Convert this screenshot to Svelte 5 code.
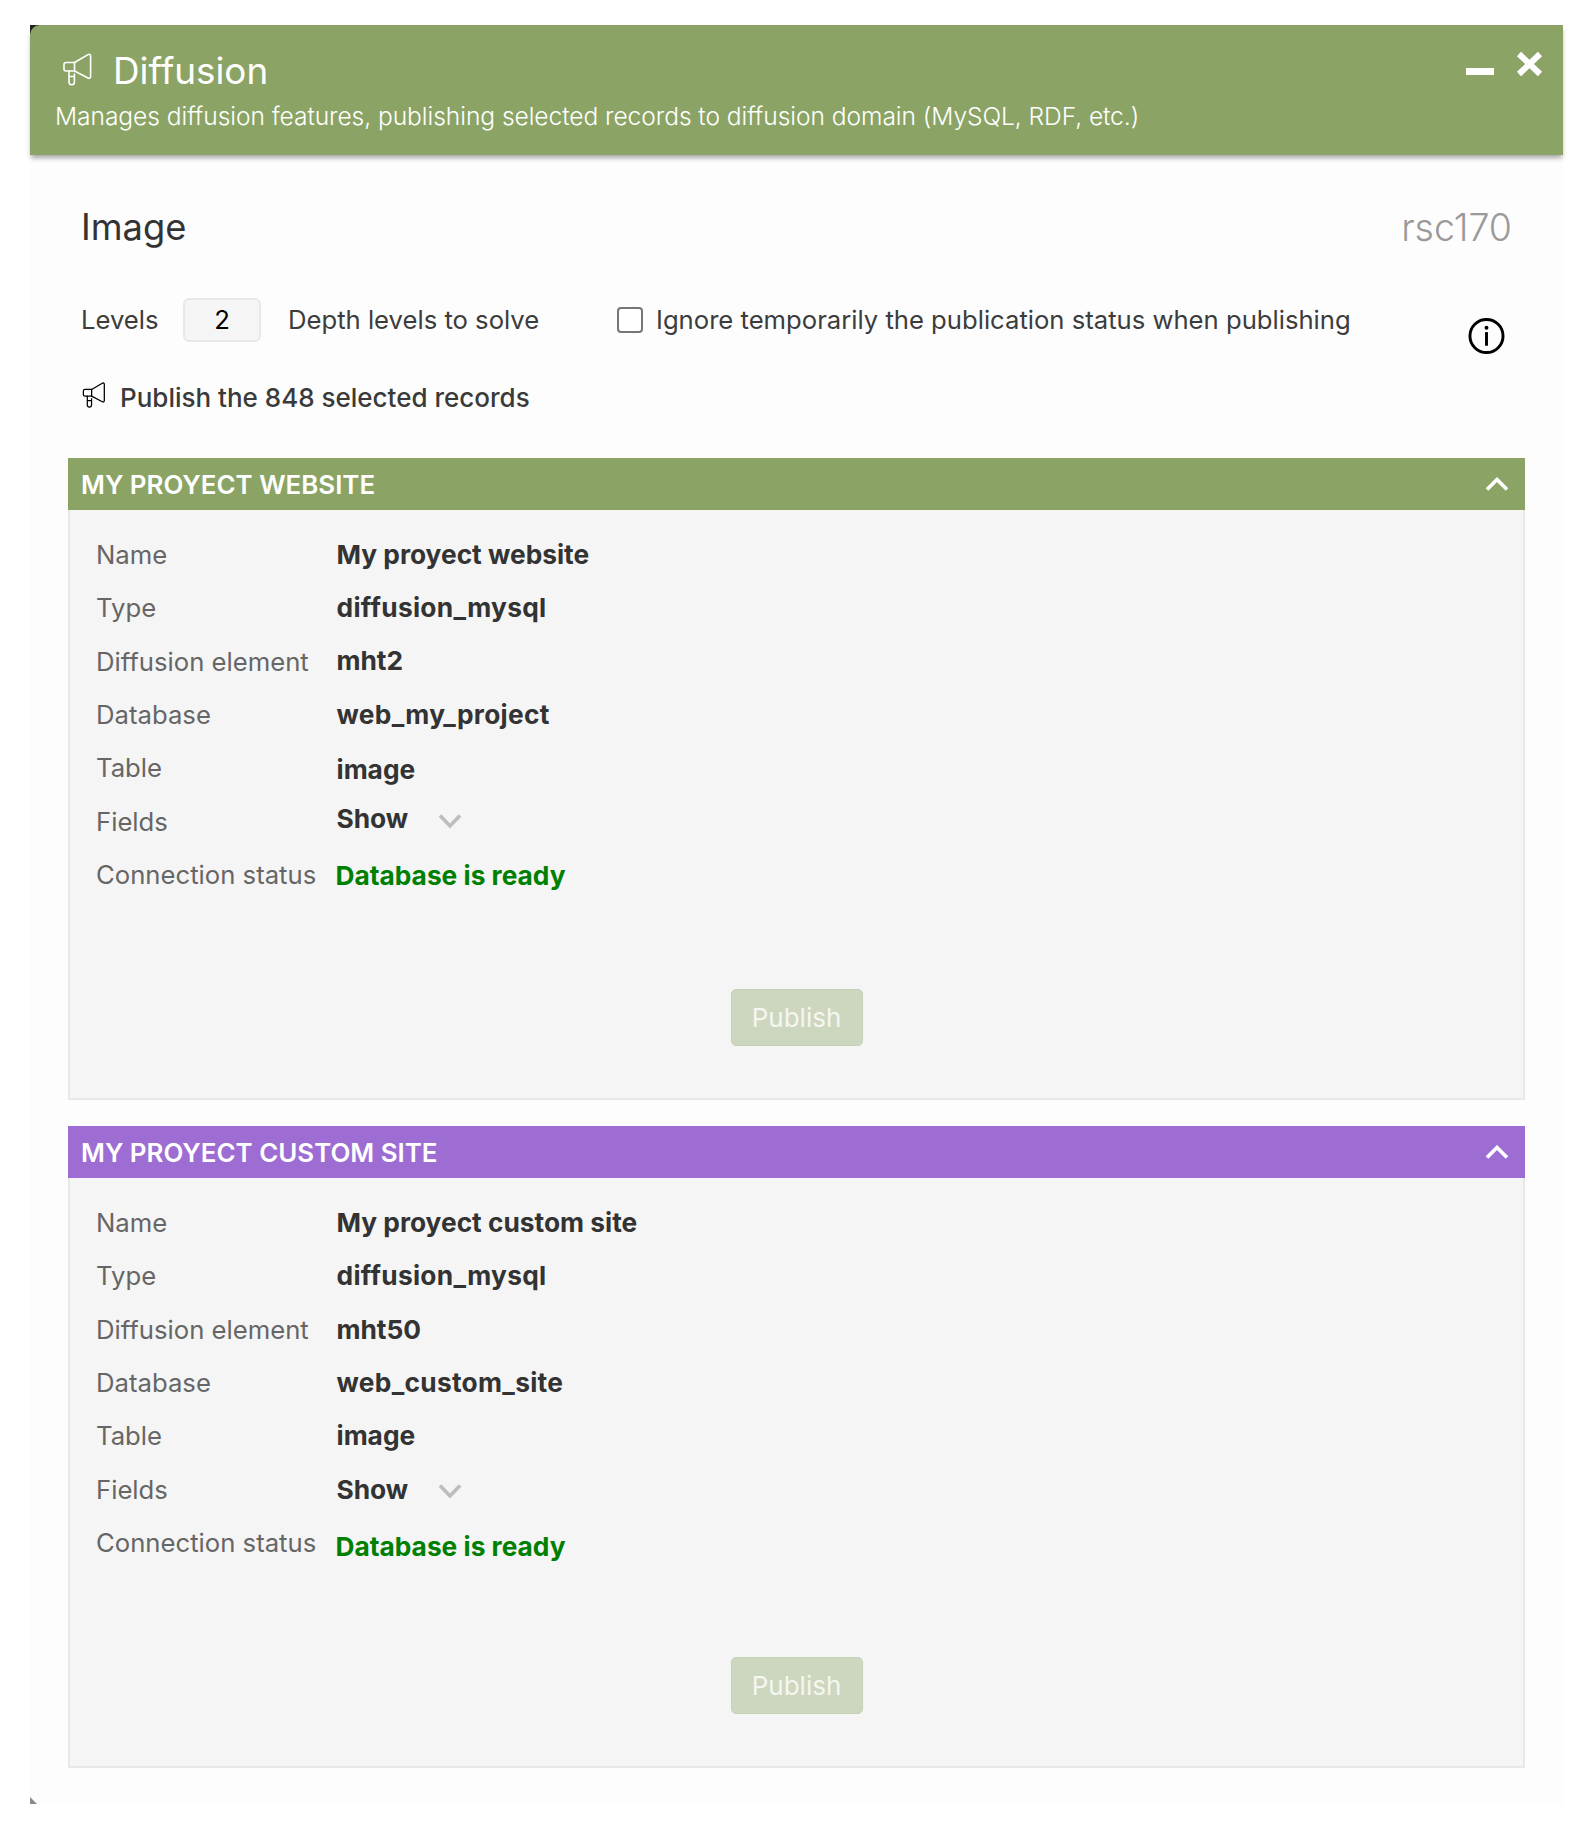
<script>
  const panels = [
    { title: 'MY PROYECT WEBSITE', color: 'green', cls: 'first', name: 'My proyect website', element: 'mht2', db: 'web_my_project' },
    { title: 'MY PROYECT CUSTOM SITE', color: 'purple', cls: 'second', name: 'My proyect custom site', element: 'mht50', db: 'web_custom_site' }
  ];
</script>

{#snippet megaphone(cls)}
  <svg class={cls} viewBox="0 0 29 33" fill="none" stroke="currentColor" stroke-width="1.6" stroke-linejoin="round" stroke-linecap="round">
    <path d="M3 9.5h8.5L25 1.6c1.4-.8 2.6 0 2.6 1.4v20.6c0 1.5-1.2 2.2-2.6 1.4L11.5 18H3c-1.2 0-2-.8-2-2v-4.500c0-1.200.8-2 2-2z"/>
    <path d="M11.500 9.500V18M6 18v11c0 1.800 1.200 2.800 2.700 2.800s2.700-1 2.700-2.800V21M6 23.500h5.400"/>
  </svg>
{/snippet}

<div class="window">
  <header class="head">
    <div class="head-text">
      <h1>{@render megaphone('mega-big')}<span>Diffusion</span></h1>
      <p>Manages diffusion features, publishing selected records to diffusion domain (MySQL, RDF, etc.)</p>
    </div>
    <div class="head-btns">
      <span class="minimize"></span>
      <svg class="close" viewBox="0 0 27 26"><path d="M3 3l21 20M24 3L3 23" stroke="#fff" stroke-width="6"/></svg>
    </div>
  </header>

  <main class="content">
    <div class="title-row">
      <h2>Image</h2>
      <span class="rsc">rsc170</span>
    </div>

    <div class="options">
      <span class="lab-levels">Levels</span>
      <span class="levels-input">2</span>
      <span class="lab-depth">Depth levels to solve</span>
      <span class="check"></span>
      <span class="lab-ignore">Ignore temporarily the publication status when publishing</span>
      <svg class="info" viewBox="0 0 37 37" fill="none" stroke="#000">
        <circle cx="18.500" cy="18.500" r="17" stroke-width="3"/>
        <path d="M18.500 14.500v14" stroke-width="3"/>
        <circle cx="18.500" cy="10" r="2" fill="#000" stroke="none"/>
      </svg>
    </div>

    <div class="publish-all">
      {@render megaphone('mega-small')}
      <span class="publish-label">Publish the 848 selected records</span>
    </div>

    {#each panels as p}
      <section class="panel {p.cls}">
        <div class="panel-head {p.color}">
          <span>{p.title}</span>
          <svg class="chev-up" viewBox="0 0 24 14" fill="none" stroke="#fff" stroke-width="3.600"><path d="M2 12.500L12 2.500l10 10"/></svg>
        </div>
        <div class="panel-body">
          <dl>
            <dt>Name</dt><dd>{p.name}</dd>
            <dt>Type</dt><dd class="code">diffusion_mysql</dd>
            <dt>Diffusion element</dt><dd>{p.element}</dd>
            <dt>Database</dt><dd class="code">{p.db}</dd>
            <dt>Table</dt><dd class="tbl">image</dd>
            <dt>Fields</dt>
            <dd class="fields">Show
              <svg class="chev-down" viewBox="0 0 24 16" fill="none" stroke="#bdbdbd" stroke-width="3.600"><path d="M2 2.500l10 10.500L22 2.500"/></svg>
            </dd>
            <dt>Connection status</dt><dd class="ready">Database is ready</dd>
          </dl>
          <div class="actions"><button disabled>Publish</button></div>
        </div>
      </section>
    {/each}
  </main>
  <span class="corner-tl"></span>
  <span class="corner-bl"></span>
</div>

<style>
  :global(body) {
    margin: 0;
    background: #fff;
    font-family: Inter, "Liberation Sans", sans-serif;
    color: #333;
  }
  .window {
    position: relative;
    width: 1533px;
    height: 1780px;
    margin: 25px 0 0 30px;
    background: #fdfdfd;
    box-sizing: border-box;
  }
  .head {
    position: relative;
    z-index: 1;
    height: 130px;
    box-sizing: border-box;
    background: #8ba465;
    color: #fff;
    border-top-left-radius: 10px;
    box-shadow: 0 4px 5px -1px rgba(0, 0, 0, 0.35);
    display: flex;
    justify-content: space-between;
    padding: 27px 20px 0 25px;
  }
  h1 {
    margin: 0 0 0 8px;
    display: flex;
    align-items: center;
    gap: 21px;
    font-size: 36.8px;
    font-weight: 400;
    line-height: 38px;
  }
  .mega-big { width: 29px; height: 33px; margin-top: -3px; }
  .head p {
    margin: 11px 0 0;
    font-size: 24.6px;
    font-weight: 300;
    line-height: 30px;
    letter-spacing: -0.07px;
  }
  .head-btns { display: flex; align-items: flex-start; gap: 22px; }
  .minimize { width: 28px; height: 7px; margin-top: 16px; background: #fff; }
  .close { width: 27px; height: 26px; margin-top: -1px; }
  .content { padding: 0 38px; }
  .title-row {
    display: flex;
    justify-content: space-between;
    align-items: center;
    height: 48px;
    margin-top: 48px;
    padding: 0 13px 0 13px;
  }
  h2 { margin: 0; font-size: 36.3px; font-weight: 400; color: #333; }
  .rsc { font-size: 37.5px; font-weight: 300; color: #9a9a9a; }
  .options {
    display: flex;
    align-items: center;
    margin-top: 47px;
    height: 44px;
    padding-left: 13px;
    font-size: 25.65px;
    color: #3c3c3c;
    position: relative;
  }
  .lab-levels { width: 102px; margin-bottom: 2px; }
  .levels-input {
    width: 78px;
    height: 44px;
    box-sizing: border-box;
    background: #f5f5f5;
    border: 2px solid #e8e8e8;
    border-radius: 6px;
    text-align: center;
    line-height: 40px;
    color: #000;
  }
  .lab-depth { margin: 0 0 2px 27px; width: 329px; }
  .check {
    width: 26px;
    height: 26px;
    box-sizing: border-box;
    border: 2px solid #767676;
    border-radius: 4px;
    background: #fff;
  }
  .lab-ignore { margin: 0 0 2px 13px; }
  .info { position: absolute; left: 1400px; top: 20px; width: 37px; height: 36px; }
  .publish-all {
    display: flex;
    align-items: center;
    gap: 14px;
    margin: 38px 0 0 14px;
    height: 36px;
    font-size: 26px;
    font-weight: 500;
    color: #3a3a3a;
  }
  .publish-label { margin-bottom: 2px; }
  .mega-small { width: 24px; height: 26px; margin-top: -6px; color: #000; }
  .panel { width: 1457px; margin-top: 26px; }
  .publish-all + .panel { margin-top: 42px; }
  .panel-head {
    height: 52px;
    display: flex;
    align-items: center;
    justify-content: space-between;
    padding: 0 16px 0 13px;
    color: #fff;
    font-size: 25.9px;
    font-weight: 600;
  }
  .green { background: #8ba465; }
  .purple { background: #9d6dd4; }
  .chev-up { width: 24px; height: 14px; }
  .panel-body {
    height: 590px;
    box-sizing: border-box;
    background: #f5f5f5;
    border: 2px solid #e8e8e8;
    border-top: none;
    padding: 18px 26px 0;
    position: relative;
  }
  dl {
    margin: 0;
    display: grid;
    grid-template-columns: 240.500px 1fr;
    grid-auto-rows: 53.300px;
    align-items: center;
    font-size: 26.3px;
  }
  dt { color: #666; font-weight: 400; font-size: 25.7px; }
  dd { margin: 0; font-weight: 700; color: #333; }
  .code { letter-spacing: 0.3px; }
  .ready { color: #008000; margin-left: -1px; }
  .fields { display: flex; align-items: center; gap: 30px; }
  .first dd { margin-bottom: 1px; }
  .first .tbl { margin-top: 5px; }
  .first .fields { margin-bottom: 5px; }
  .first .ready { margin-top: 3px; }
  .second .ready { margin-top: 8px; }
  .chev-down { width: 24px; height: 16px; margin-top: 4px; }
  .actions { position: absolute; left: 0; right: 0; top: 479px; display: flex; justify-content: center; }
  button {
    width: 132px;
    height: 57px;
    border: 1px solid #c6d1b6;
    border-radius: 5px;
    background: #cdd6bf;
    color: #f4f6f0;
    font-family: inherit;
    font-size: 26px;
    padding: 0;
  }
  .corner-tl {
    position: absolute; left: 0; top: 0; width: 10px; height: 10px; z-index: 0;
    background: #222; clip-path: polygon(0 0, 100% 0, 0 100%);
  }
  .corner-bl {
    position: absolute; left: 0; top: 1772px; width: 7px; height: 7px;
    background: #8a8a8a; clip-path: polygon(0 0, 100% 100%, 0 100%);
  }
</style>
